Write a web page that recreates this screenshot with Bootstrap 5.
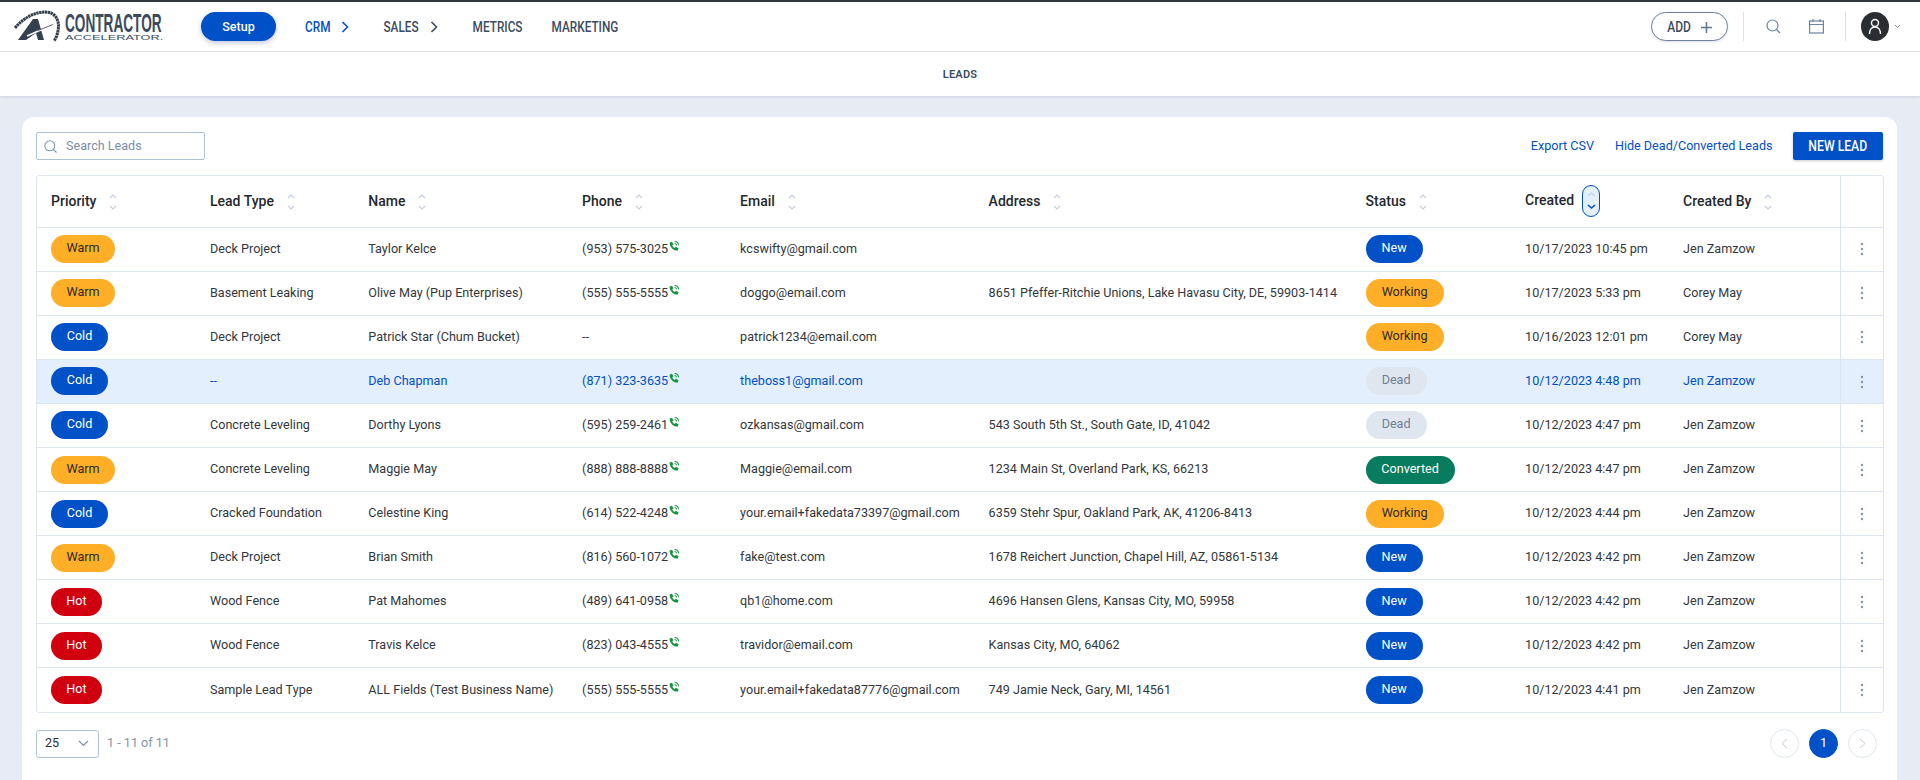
<!DOCTYPE html>
<html lang="en"><head><meta charset="utf-8"><title>Leads</title>
<link href="https://cdn.jsdelivr.net/npm/bootstrap@5.3.0/dist/css/bootstrap.min.css" rel="stylesheet">
<style>
:root{--ca-blue:#0050c8;--ca-line:#dde5f0;--ca-ink:#2b2f36;--ca-nav:#3d4b5f;}
html,body{height:780px;overflow:hidden}
body{background:#e6ebf4;font-family:Roboto,sans-serif;color:var(--ca-ink);font-size:12.6px;border-top:2px solid #33373d}
.topbar{height:50px;background:#fff;border-bottom:1px solid #dfe3e8;padding-left:14px;padding-right:19px}
.brand{width:156px;height:31px;margin-right:31px;overflow:visible}
.setup-btn{width:75px;height:29px;border-radius:15px;background:var(--ca-blue);color:#fff;border:0;font:500 12.5px Roboto,sans-serif;box-shadow:0 2px 5px rgba(0,40,110,.25)}
.tall{display:inline-block;transform:scaleY(1.2)}
.mainlink{font:500 11.8px Roboto,sans-serif;color:var(--ca-nav);text-decoration:none;white-space:nowrap;display:flex;align-items:center}
.mainlink.on{color:var(--ca-blue)}
.mainlink svg{margin-left:11px}
.ml-crm{margin-left:29px}.ml-sales{margin-left:34px}.ml-metrics{margin-left:35px}.ml-mkt{margin-left:29px}
.add-btn{width:77px;height:29px;border-radius:15px;border:1px solid #6d819c;background:#fff;color:var(--ca-nav);font:500 12px Roboto,sans-serif;box-shadow:0 1px 3px rgba(0,0,0,.12);padding:0}
.add-btn svg{margin-left:10px}
.vsep{width:1px;height:29px;background:#dbe2ec}
.sp-a{margin-left:15px}.sp-b{margin-left:22px}.sp-c{margin-left:28px}.sp-d{margin-left:21px}.sp-e{margin-left:15px}.sp-f{margin-left:5px}
.avatar{width:28px;height:29px;border-radius:50%;background:#2a2d31}
.subbar{height:44px;background:#fff;box-shadow:0 1px 3px rgba(30,50,90,.12);font:600 11px Roboto,sans-serif;letter-spacing:.2px;color:#3d4b5f}
.panel{margin:21px 23px 0 22px;background:#fff;border-radius:12px 12px 0 0;height:670px;padding:15px 14px 0 14px}
.searchbox{width:169px;height:28px;border:1px solid #afc1d8;border-radius:2px;color:#7d8ea8;font-size:12.6px;padding-left:7px;gap:9px}
.lnk{color:var(--ca-blue);text-decoration:none;font-size:12.6px}
.lnk-hide{margin-left:21px;margin-right:20px}
.newbtn{width:90.5px;height:28px;background:var(--ca-blue);color:#fff;border:0;border-radius:2px;font:500 12.2px Roboto,sans-serif;box-shadow:0 1px 3px rgba(0,0,0,.2);padding:0}
.tblwrap{margin-top:15px;border:1px solid var(--ca-line);border-radius:3px;width:1847.5px}
table.leads{table-layout:fixed;width:100%;border-collapse:collapse;margin:0}
col:nth-child(1){width:159px}col:nth-child(2){width:158.3px}col:nth-child(3){width:213.8px}col:nth-child(4){width:158px}col:nth-child(5){width:248.5px}col:nth-child(6){width:377px}col:nth-child(7){width:159.5px}col:nth-child(8){width:158px}col:nth-child(9){width:171.4px}
table.leads th{height:51px;font:500 14px Roboto,sans-serif;color:#24282e;padding:0 0 0 14px;border-bottom:1px solid var(--ca-line);white-space:nowrap}
table.leads td{height:44.1px;padding:0 0 0 14px;border-bottom:1px solid var(--ca-line);white-space:nowrap;font-size:12.6px;color:#33373d}
table.leads tr:last-child td{border-bottom:0}
table.leads .endcol{border-left:1px solid var(--ca-line);padding:0;text-align:center}
tr.sel td{background:#e3effc;color:var(--ca-blue)!important}
.pill{display:inline-flex;justify-content:center;align-items:center;height:28px;border-radius:14px;font-size:12.6px;padding-bottom:1px}
.p-warm{background:#ffae28;color:#2b2b2b}.p-cold{background:var(--ca-blue);color:#fff}.p-hot{background:#d0000f;color:#fff}
.p-new{background:var(--ca-blue);color:#fff}.p-work{background:#ffae28;color:#2b2b2b}.p-dead{background:#dfe6f0;color:#6f7f94}.p-conv{background:#087c5e;color:#fff}
.sorter{display:inline-block;vertical-align:middle;margin-left:13px;width:8px}
.sorter svg{display:block}
.sorter-on{display:inline-flex;align-items:center;justify-content:center;vertical-align:middle;margin-left:8px;width:18px;height:32px;border:1px solid var(--ca-blue);border-radius:9px;background:#e3effc}
.tel{vertical-align:2px;margin-left:1px}
.foot{margin-top:16px}
.perpage{width:63px;height:28px;border:1px solid #afc1d8;border-radius:3px;padding:0 9px 0 8px;font-size:12.6px}
.pgtxt{color:#8294ac;font-size:12.6px}
.pgc{width:29px;height:29px;border-radius:50%;border:1px solid #e0e7f1;background:#fff;color:#c4cfde;padding:0;display:flex;align-items:center;justify-content:center}
.pgc.cur{background:var(--ca-blue);border-color:var(--ca-blue);color:#fff;font-size:12.6px}
.pgrp{margin-right:6px;gap:10px}
.w-warm{width:64px}.w-cold{width:57px}.w-hot{width:51px}.w-new{width:57px}.w-working{width:78px}.w-dead{width:61px}.w-converted{width:89px}
</style></head>
<body>
<header class="topbar d-flex align-items-center">
<svg class="brand" viewBox="0 0 156 31" aria-label="Contractor Accelerator logo">
<path d="M1 17C10 6 22 1 31 1 40 1 44 7 44.500 14 44.500 20 43 26 40 30" fill="none" stroke="#33404f" stroke-width="3" stroke-dasharray="2.400 .5"/>
<polygon points="4,29 19,8 24,8 30,29 24,29 22,22 12,29" fill="#33404f"/>
<path d="M13 25 38 14" stroke="#fff" stroke-width="1.600"/><path d="M24 19.500 39 13.500" stroke="#33404f" stroke-width=".8"/>
<text transform="translate(51 21) scale(.545 1)" font-family="Liberation Sans" font-weight="700" font-size="25" fill="#3b4a5d">CONTRACTOR</text>
<text transform="translate(51 29) scale(1.83 1)" font-family="Liberation Sans" font-size="7" fill="#3b4a5d">ACCELERATOR.</text>
</svg>
<button class="setup-btn">Setup</button>
<nav class="d-flex align-items-center">
<a class="mainlink on ml-crm" href="#"><span class="tall">CRM</span><svg width="8" height="12" viewBox="0 0 8 12"><path d="M1.500 1l5 5-5 5" fill="none" stroke="currentColor" stroke-width="1.600"/></svg></a>
<a class="mainlink ml-sales" href="#"><span class="tall">SALES</span><svg width="8" height="12" viewBox="0 0 8 12"><path d="M1.500 1l5 5-5 5" fill="none" stroke="currentColor" stroke-width="1.600"/></svg></a>
<a class="mainlink ml-metrics" href="#"><span class="tall">METRICS</span></a>
<a class="mainlink ml-mkt" href="#"><span class="tall">MARKETING</span></a>
</nav>
<div class="ms-auto d-flex align-items-center">
<button class="add-btn"><span class="tall">ADD</span><svg width="11" height="11" viewBox="0 0 11 11"><path d="M5.500 0v11M0 5.500h11" stroke="#5f7590" stroke-width="1.500"/></svg></button>
<span class="vsep sp-a"></span>
<svg class="sp-b" width="15" height="15" viewBox="0 0 15 15"><circle cx="6.500" cy="6.500" r="5.500" fill="none" stroke="#6a84a3" stroke-width="1.200"/><path d="M10.700 10.700 14 14" stroke="#6a84a3" stroke-width="1.300"/></svg>
<svg class="sp-c" width="15" height="15" viewBox="0 0 15 15" fill="none" stroke="#6a84a3" stroke-width="1.200"><rect x=".6" y="2" width="13.800" height="12"/><path d="M.6 5.500h13.800M4 0v3M11 0v3"/></svg>
<span class="vsep sp-d"></span>
<span class="avatar sp-e d-flex align-items-center justify-content-center"><svg width="14" height="17" viewBox="0 0 14 17" fill="none" stroke="#fff" stroke-width="1.400"><circle cx="7" cy="5" r="3.500"/><path d="M1.500 16c0-4 2-7 5.500-7s5.500 3 5.500 7"/></svg></span>
<svg class="sp-f" width="7" height="5" viewBox="0 0 7 5"><path d="M1 1l2.500 2.500L6 1" fill="none" stroke="#7f90a8"/></svg>
</div>
</header>
<div class="subbar d-flex align-items-center justify-content-center">LEADS</div>
<main class="panel">
<div class="d-flex align-items-center">
<div class="searchbox d-flex align-items-center"><svg width="13" height="13" viewBox="0 0 13 13"><circle cx="5.800" cy="5.800" r="5" fill="none" stroke="#7f97b5" stroke-width="1.100"/><path d="M9.500 9.500l3 3" stroke="#7f97b5" stroke-width="1.100"/></svg><span>Search Leads</span></div>
<a class="lnk ms-auto" href="#">Export CSV</a>
<a class="lnk lnk-hide" href="#">Hide Dead/Converted Leads</a>
<button class="newbtn"><span class="tall">NEW LEAD</span></button>
</div>
<div class="tblwrap">
<table class="leads"><colgroup><col><col><col><col><col><col><col><col><col><col></colgroup><thead><tr id="h"></tr></thead><tbody id="b"></tbody></table>
</div>
<div class="foot d-flex align-items-center">
<div class="perpage d-flex align-items-center justify-content-between"><span>25</span><svg width="11" height="7" viewBox="0 0 11 7"><path d="M1 1l4.500 4.500L10 1" fill="none" stroke="#7f90a8" stroke-width="1.200"/></svg></div>
<span class="pgtxt ms-2">1 - 11 of 11</span>
<div class="ms-auto d-flex pgrp">
<button class="pgc"><svg width="7" height="11" viewBox="0 0 7 11"><path d="M6 1L1 5.500 6 10" fill="none" stroke="currentColor"/></svg></button>
<button class="pgc cur">1</button>
<button class="pgc"><svg width="7" height="11" viewBox="0 0 7 11"><path d="M1 1l5 4.500L1 10" fill="none" stroke="currentColor"/></svg></button>
</div>
</div>
</main>
<script>
const sort='<span class="sorter"><svg width="8" height="16" viewBox="0 0 8 16" fill="none" stroke="#c3cde0" stroke-width="1.100"><path d="M1 4l3-3 3 3M1 12l3 3 3-3"/></svg></span>';
const sortOn='<span class="sorter-on"><svg width="9" height="18" viewBox="0 0 9 18" fill="none"><path d="M1 4l3.500-3L8 4" stroke="#c3d4ee" stroke-width="1.100"/><path d="M1 13l3.500 3L8 13" stroke="#0050c8" stroke-width="1.600"/></svg></span>';
document.getElementById('h').innerHTML=['Priority','Lead Type','Name','Phone','Email','Address','Status','Created','Created By'].map(x=>'<th>'+x+(x==='Created'?sortOn:sort)+'</th>').join('')+'<th class="endcol"></th>';
const tel='<svg class="tel" width="10" height="10" viewBox="0 0 10.500 10.500"><path d="M.7 1.500 3.200.8 4.600 3.600 3.400 4.800C3.900 6 4.800 6.900 6 7.400L7.200 6.100 10 7.500 9.300 10C4.800 10.500.2 6 .7 1.500Z" fill="#14963f"/><path d="M6 .6a4.200 4.200 0 0 1 4 4M6 2.700a2 2 0 0 1 1.900 1.900" fill="none" stroke="#14963f" stroke-width="1.100"/></svg>';
const C={Warm:'p-warm',Cold:'p-cold',Hot:'p-hot',New:'p-new',Working:'p-work',Dead:'p-dead',Converted:'p-conv'};
const pill=s=>'<span class="pill '+C[s]+' w-'+s.toLowerCase()+'">'+s+'</span>';
const R=[
['Warm','Deck Project','Taylor Kelce','(953) 575-3025','kcswifty@gmail.com','','New','10/17/2023 10:45 pm','Jen Zamzow'],
['Warm','Basement Leaking','Olive May (Pup Enterprises)','(555) 555-5555','doggo@email.com','8651 Pfeffer-Ritchie Unions, Lake Havasu City, DE, 59903-1414','Working','10/17/2023 5:33 pm','Corey May'],
['Cold','Deck Project','Patrick Star (Chum Bucket)','--','patrick1234@email.com','','Working','10/16/2023 12:01 pm','Corey May'],
['Cold','--','Deb Chapman','(871) 323-3635','theboss1@gmail.com','','Dead','10/12/2023 4:48 pm','Jen Zamzow'],
['Cold','Concrete Leveling','Dorthy Lyons','(595) 259-2461','ozkansas@gmail.com','543 South 5th St., South Gate, ID, 41042','Dead','10/12/2023 4:47 pm','Jen Zamzow'],
['Warm','Concrete Leveling','Maggie May','(888) 888-8888','Maggie@email.com','1234 Main St, Overland Park, KS, 66213','Converted','10/12/2023 4:47 pm','Jen Zamzow'],
['Cold','Cracked Foundation','Celestine King','(614) 522-4248','your.email+fakedata73397@gmail.com','6359 Stehr Spur, Oakland Park, AK, 41206-8413','Working','10/12/2023 4:44 pm','Jen Zamzow'],
['Warm','Deck Project','Brian Smith','(816) 560-1072','fake@test.com','1678 Reichert Junction, Chapel Hill, AZ, 05861-5134','New','10/12/2023 4:42 pm','Jen Zamzow'],
['Hot','Wood Fence','Pat Mahomes','(489) 641-0958','qb1@home.com','4696 Hansen Glens, Kansas City, MO, 59958','New','10/12/2023 4:42 pm','Jen Zamzow'],
['Hot','Wood Fence','Travis Kelce','(823) 043-4555','travidor@email.com','Kansas City, MO, 64062','New','10/12/2023 4:42 pm','Jen Zamzow'],
['Hot','Sample Lead Type','ALL Fields (Test Business Name)','(555) 555-5555','your.email+fakedata87776@gmail.com','749 Jamie Neck, Gary, MI, 14561','New','10/12/2023 4:41 pm','Jen Zamzow']];
const dots='<svg width="4" height="14" viewBox="0 0 4 14" fill="#8496b0"><circle cx="2" cy="2" r="1.200"/><circle cx="2" cy="7" r="1.200"/><circle cx="2" cy="12" r="1.200"/></svg>';
document.getElementById('b').innerHTML=R.map((r,i)=>'<tr'+(i===3?' class="sel"':'')+'>'+r.map((c,j)=>'<td>'+(j===0||j===6?pill(c):j===3&&c!=='--'?c+tel:c)+'</td>').join('')+'<td class="endcol">'+dots+'</td></tr>').join('');
</script>
</body></html>
